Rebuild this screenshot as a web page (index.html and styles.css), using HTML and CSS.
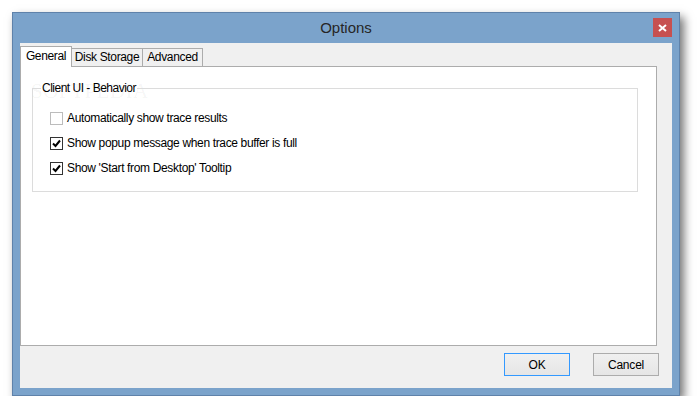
FILE: index.html
```html
<!DOCTYPE html>
<html>
<head>
<meta charset="utf-8">
<link rel="stylesheet" href="styles.css">
</head>
<body>
<div class="window">
  <div class="titlebar">
    <span></span>
    <span class="title">Options</span>
    <span class="close-wrap"><span class="close">
      <svg width="9" height="8" viewBox="0 0 9 8"><path d="M1 1 L8 7 M8 1 L1 7" stroke="#fff" stroke-width="2"/></svg>
    </span></span>
  </div>
  <div class="client">
    <div class="tabs">
      <div class="tab active w1">General</div>
      <div class="tab w2">Disk Storage</div>
      <div class="tab w3">Advanced</div>
    </div>
    <div class="panel">
      <div class="watermark">SOFTPEDIA<sup>™</sup></div>
      <fieldset class="group">
        <legend>Client UI - Behavior</legend>
        <label class="row"><span class="box disabled"></span>Automatically show trace results</label>
        <label class="row"><span class="box"><svg width="11" height="11" viewBox="0 0 11 11"><path d="M2 5.5 L4.5 8 L9 2.5" fill="none" stroke="#000" stroke-width="2"/></svg></span>Show popup message when trace buffer is full</label>
        <label class="row"><span class="box"><svg width="11" height="11" viewBox="0 0 11 11"><path d="M2 5.5 L4.5 8 L9 2.5" fill="none" stroke="#000" stroke-width="2"/></svg></span>Show 'Start from Desktop' Tooltip</label>
      </fieldset>
    </div>
    <div class="footer">
      <button class="btn default">OK</button>
      <button class="btn">Cancel</button>
    </div>
  </div>
</div>
</body>
</html>
```
FILE: styles.css
```css
* { box-sizing: border-box; }
html, body { margin: 0; padding: 0; background: #fff; }
body {
  font-family: "Liberation Sans", Arial, sans-serif;
  font-size: 12px;
  letter-spacing: -0.35px;
  color: #000;
}
.window {
  margin: 12px 0 0 12px;
  width: 668px;
  height: 384px;
  background: #7ba3cb;
  border: 1px solid #5f82aa;
  box-shadow: 4px 5px 9px rgba(0,0,0,0.55);
  display: flex;
  flex-direction: column;
}
.titlebar {
  height: 30px;
  display: grid;
  grid-template-columns: 1fr auto 1fr;
  align-items: start;
  padding: 0 7px;
}
.title {
  font-size: 15px;
  letter-spacing: 0;
  color: #262626;
  line-height: 28px;
  padding-top: 1px;
}
.close-wrap { display: flex; justify-content: flex-end; padding-top: 5px; }
.close {
  width: 19px;
  height: 19px;
  background: #c75050;
  display: flex;
  align-items: center;
  justify-content: center;
}
.client {
  margin: 0 7px 7px;
  flex: 1;
  background: #f0f0f0;
  display: flex;
  flex-direction: column;
}
.tabs {
  display: flex;
  align-items: flex-end;
  height: 23px;
  padding-top: 3px;
}
.tab {
  height: 18px;
  border: 1px solid #acacac;
  border-bottom: none;
  border-left: none;
  background: #f0f0f0;
  line-height: 17px;
  text-align: center;
  color: #000;
}
.w1 { width: 52px; }
.w2 { width: 71px; }
.w3 { width: 60px; }
.tab.active {
  height: 21px;
  background: #fff;
  border-left: 1px solid #acacac;
  position: relative;
  margin-bottom: -1px;
  line-height: 19px;
  z-index: 1;
}
.panel {
  position: relative;
  width: 637px;
  height: 280px;
  background: #fff;
  border: 1px solid #acacac;
  padding: 14px 18px 0 11px;
}
.watermark {
  position: absolute;
  left: 10px;
  top: 12px;
  font-family: "Liberation Serif", serif;
  font-size: 21px;
  letter-spacing: 0.5px;
  color: rgba(0,0,0,0.05);
  pointer-events: none;
}
.watermark sup { font-size: 7px; vertical-align: 12px; }
.group {
  position: relative;
  margin: 0;
  border: 1px solid #dcdcdc;
  height: 111px;
  padding: 17px 0 0 17px;
  display: flex;
  flex-direction: column;
  gap: 12px;
}
.group legend {
  padding: 0 1px;
  margin-left: -9px;
  font-size: 12px;
  letter-spacing: -0.5px;
  color: #000;
}
.row {
  display: flex;
  align-items: center;
  gap: 4px;
  height: 13px;
  line-height: 13px;
}
.box {
  width: 13px;
  height: 13px;
  border: 1px solid #333;
  background: #fff;
  display: flex;
  align-items: center;
  justify-content: center;
}
.box.disabled { border-color: #bcbcbc; }
.footer {
  display: flex;
  justify-content: flex-end;
  gap: 23px;
  padding: 7px 13px 0 0;
}
.btn {
  width: 66px;
  height: 23px;
  font-family: inherit;
  font-size: 12px;
  letter-spacing: -0.2px;
  color: #000;
  background: linear-gradient(#f0f0f0, #e5e5e5);
  border: 1px solid #acacac;
  border-radius: 0;
  padding: 0;
}
.btn.default { border-color: #3399ff; }
```
